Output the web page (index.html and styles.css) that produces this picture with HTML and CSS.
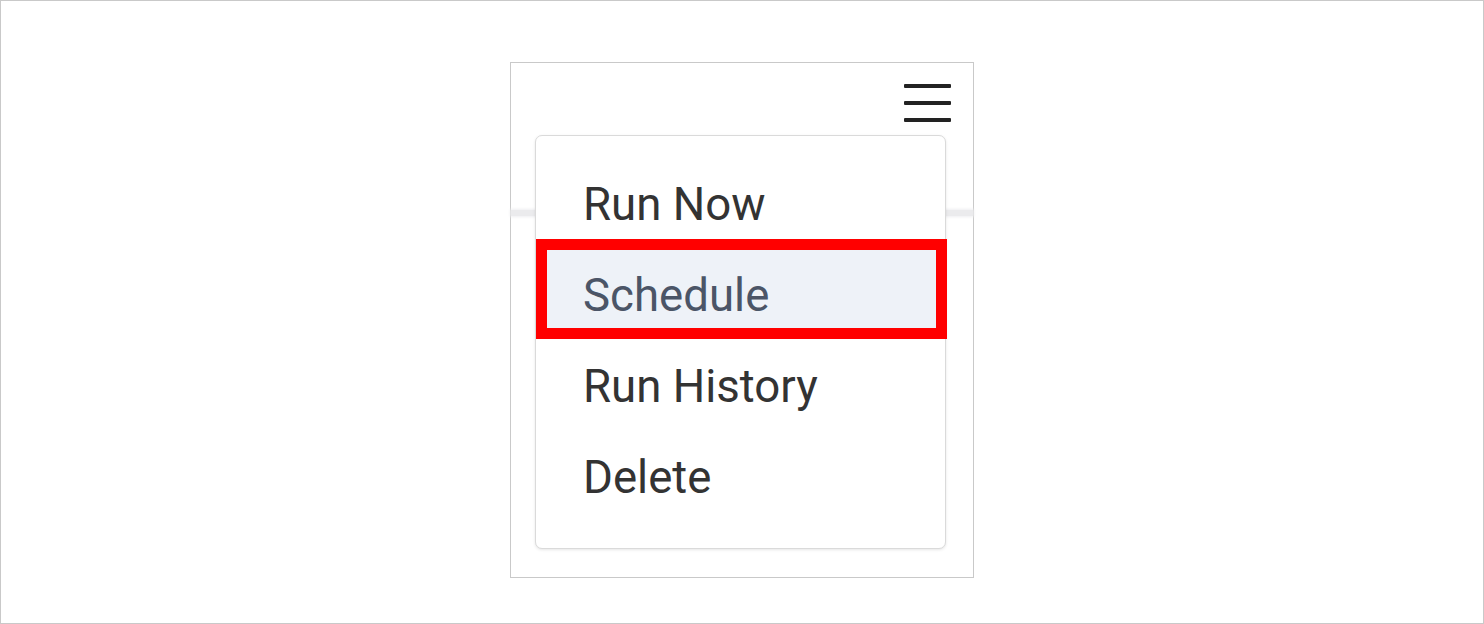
FILE: index.html
```html
<!DOCTYPE html>
<html>
<head>
<meta charset="utf-8">
<link rel="stylesheet" href="styles.css">
</head>
<body>
<div class="frame">
  <div class="card">
    <div class="card-header">
      <svg class="hamburger" width="47" height="38" viewBox="0 0 47 38" aria-label="menu">
        <rect x="0" y="0" width="47" height="4" rx="1" fill="#222"/>
        <rect x="0" y="17" width="47" height="4" rx="1" fill="#222"/>
        <rect x="0" y="34" width="47" height="4" rx="1" fill="#222"/>
      </svg>
    </div>
    <div class="divider"></div>
    <ul class="menu">
      <li class="menu-item">Run Now</li>
      <li class="menu-item menu-item--active">Schedule</li>
      <li class="menu-item">Run History</li>
      <li class="menu-item">Delete</li>
    </ul>
  </div>
</div>
</body>
</html>
```
FILE: styles.css
```css
html, body {
  margin: 0;
  padding: 0;
  background: #fff;
}
body {
  font-family: Roboto, "Liberation Sans", sans-serif;
}
.frame {
  box-sizing: border-box;
  width: 1484px;
  height: 624px;
  border: 1px solid #c9c9c9;
  display: flex;
  justify-content: center;
  align-items: flex-start;
  padding-top: 61px;
}
.card {
  position: relative;
  box-sizing: border-box;
  width: 464px;
  height: 516px;
  border: 1px solid #c9c9c9;
  background: #fff;
  display: flex;
  flex-direction: column;
}
.card-header {
  display: flex;
  justify-content: flex-end;
  padding: 21px 22px 0 0;
}
.hamburger {
  display: block;
}
.divider {
  margin-top: 88px;
  height: 6px;
  background: #ebebed;
  box-shadow: 0 0 3px 1px #efeff1;
}
.menu {
  position: absolute;
  top: 72px;
  left: 24px;
  box-sizing: border-box;
  width: 411px;
  margin: 0;
  padding: 23px 0 25px;
  list-style: none;
  background: #fff;
  border: 1px solid #dadada;
  border-radius: 7px;
  box-shadow: 0 1px 3px rgba(0, 0, 0, 0.10);
}
.menu-item {
  position: relative;
  z-index: 0;
  height: 91px;
  line-height: 91px;
  padding-left: 47px;
  font-size: 45.6px;
  color: #333;
  white-space: nowrap;
}
.menu-item--active {
  color: #4b5567;
}
.menu-item--active::before {
  content: "";
  position: absolute;
  z-index: -1;
  top: -11px;
  bottom: 2px;
  left: 0;
  right: -2px;
  background: #eef2f8;
  border: 11px solid #ff0000;
}
```
